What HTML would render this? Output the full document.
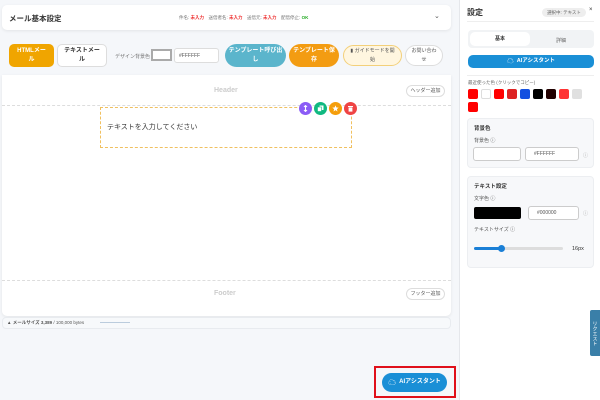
<!DOCTYPE html><html><head><meta charset="utf-8"><style>
*{box-sizing:border-box;margin:0;padding:0}
body{width:600px;height:400px;overflow:hidden;background:#f5f7fa;font-family:"Liberation Sans","Noto Sans CJK JP",sans-serif;position:relative;color:#333}
.a{position:absolute}
.card{background:#fff;border-radius:5px;box-shadow:0 1px 3px rgba(0,0,0,.08)}
.btn{position:absolute;border-radius:5px;font-size:6px;font-weight:bold;display:flex;align-items:center;justify-content:center;text-align:center;line-height:9px}
.sw{position:absolute;width:10px;height:10px;border-radius:2px}
.ic{position:absolute;width:13px;height:13px;border-radius:50%;top:102px;display:flex;align-items:center;justify-content:center}
.inp{position:absolute;border:1px solid #ccc;border-radius:3px;background:#fff;font-size:5px;color:#555;padding-left:8px;display:flex;align-items:center}
</style></head><body>
<div class="a card" style="left:2px;top:5px;width:449px;height:25px"></div>
<div class="a" style="left:9px;top:13px;font-size:7.5px;font-weight:bold">メール基本設定</div>
<div class="a" style="left:179px;top:15px;font-size:4.5px;color:#777">件名: <b style="color:#e33">未入力</b>　送信者名: <b style="color:#e33">未入力</b>　送信元: <b style="color:#e33">未入力</b>　配信停止: <b style="color:#2a2">OK</b></div>
<div class="a" style="left:434px;top:12px;font-size:7px;color:#555">⌄</div>
<div class="a" style="left:2px;top:37px;width:449px;height:38px;background:#f5f7fa;border-radius:5px 5px 0 0"></div>
<div class="btn" style="left:9px;top:44px;width:45px;height:23px;background:#f0a500;color:#fff">HTMLメー<br>ル</div>
<div class="btn" style="left:57px;top:44px;width:50px;height:23px;background:#fff;border:1px solid #ddd">テキストメー<br>ル</div>
<div class="a" style="left:115px;top:53px;font-size:5px;color:#777">デザイン背景色</div>
<div class="a" style="left:151px;top:49px;width:21px;height:12px;border:2px solid #aaa;background:#fff"></div>
<div class="inp" style="left:174px;top:48px;width:45px;height:15px;border-color:#ddd;padding-left:4px">#FFFFFF</div>
<div class="btn" style="left:225px;top:44px;width:61px;height:23px;background:#5bb5cc;color:#fff;border-radius:12px">テンプレート呼び出<br>し</div>
<div class="btn" style="left:289px;top:44px;width:50px;height:23px;background:#f39c12;color:#fff;border-radius:12px">テンプレート保<br>存</div>
<div class="btn" style="left:343px;top:45px;width:59px;height:21px;background:#fff6e0;border:1px solid #f3d07a;color:#555;border-radius:11px;font-weight:normal;font-size:5px">▮ ガイドモードを開<br>始</div>
<div class="btn" style="left:405px;top:45px;width:38px;height:21px;background:#fff;border:1px solid #ddd;color:#555;border-radius:11px;font-weight:normal;font-size:5px">お問い合わ<br>せ</div>
<div class="a" style="left:2px;top:75px;width:449px;height:241px;background:#fff;border-radius:0 0 5px 5px;box-shadow:0 1px 3px rgba(0,0,0,.08)"></div>
<div class="a" style="left:214px;top:87px;font-size:7px;font-weight:bold;color:#ccc">Header</div>
<div class="btn" style="left:406px;top:85px;width:39px;height:12px;border:1px solid #ddd;border-radius:6px;font-weight:normal;font-size:5px;color:#555">ヘッダー追加</div>
<div class="a" style="left:2px;top:105px;width:449px;border-top:1px dashed #ddd"></div>
<div class="a" style="left:100px;top:107px;width:252px;height:41px;border:1px dashed #f0c060"></div>
<div class="a" style="left:107px;top:122px;font-size:7px">テキストを入力してください</div>
<div class="ic" style="left:299px;background:#8b5cf6"><svg width="7" height="7" viewBox="0 0 7 7"><path d="M3.5 0.5V6.5M2 2L3.5 0.5 5 2M2 5L3.5 6.5 5 5" stroke="#fff" stroke-width="1" fill="none"/></svg></div>
<div class="ic" style="left:314px;background:#10b981"><svg width="7" height="7" viewBox="0 0 7 7"><rect x="2.5" y="0.5" width="4" height="4.5" fill="#fff"/><rect x="0.5" y="2" width="4" height="4.5" fill="#fff" stroke="#10b981" stroke-width=".6"/></svg></div>
<div class="ic" style="left:329px;background:#f59e0b"><svg width="7" height="7" viewBox="0 0 10 10"><path d="M5 0.5L6.3 3.6 9.5 3.8 7 5.9 7.8 9.2 5 7.4 2.2 9.2 3 5.9 0.5 3.8 3.7 3.6Z" fill="#fff"/></svg></div>
<div class="ic" style="left:344px;background:#ef4444"><svg width="7" height="7" viewBox="0 0 7 7"><rect x="1" y="1" width="5" height="1" fill="#fff"/><rect x="1.6" y="2.4" width="3.8" height="4.2" fill="#fff"/></svg></div>
<div class="a" style="left:2px;top:280px;width:449px;border-top:1px dashed #ddd"></div>
<div class="a" style="left:214px;top:290px;font-size:7px;font-weight:bold;color:#ccc">Footer</div>
<div class="btn" style="left:406px;top:288px;width:39px;height:12px;border:1px solid #ddd;border-radius:6px;font-weight:normal;font-size:5px;color:#555">フッター追加</div>
<div class="a" style="left:2px;top:317px;width:449px;height:12px;border:1px solid #e8ebef;border-radius:4px;background:#f7f9fb"></div>
<div class="a" style="left:7px;top:320px;font-size:4.5px;color:#555">▲ <b>メールサイズ 3,389</b> / 100,000 bytes</div>
<div class="a" style="left:100px;top:322px;width:30px;height:1px;background:#bcd"></div>
<div class="a" style="left:374px;top:366px;width:82px;height:32px;border:2px solid #e0101a"></div>
<div class="btn" style="left:382px;top:373px;width:65px;height:19px;background:#1a8fd6;color:#fff;border-radius:10px;font-size:6px"><span style="font-size:8px">☁</span>&nbsp; AIアシスタント</div>
<div class="a" style="left:459px;top:0;width:141px;height:400px;background:#fff;border-left:1px solid #e5e7eb"></div>
<div class="a" style="left:467px;top:7px;font-size:8px;font-weight:bold">設定</div>
<div class="a" style="left:542px;top:8px;width:44px;height:9px;background:#eee;border-radius:5px;font-size:4.5px;color:#666;text-align:center;line-height:9px">選択中: テキスト</div>
<div class="a" style="left:589px;top:7px;font-size:6px">×</div>
<div class="a" style="left:467px;top:21px;width:127px;border-top:1px solid #eee"></div>
<div class="a" style="left:468px;top:30px;width:126px;height:18px;background:#f1f3f5;border-radius:4px"></div>
<div class="btn" style="left:470px;top:32px;width:60px;height:14px;background:#fff;font-size:5px">基本</div>
<div class="a" style="left:556px;top:37px;font-size:5px;color:#666">詳細</div>
<div class="btn" style="left:468px;top:55px;width:126px;height:13px;background:#1a8fd6;color:#fff;font-size:5.5px"><span style="font-size:7px">☁</span>&nbsp; AIアシスタント</div>
<div class="a" style="left:467px;top:75px;width:127px;border-top:1px solid #eee"></div>
<div class="a" style="left:468px;top:80px;font-size:4.5px;color:#666">最近使った色 (クリックでコピー)</div>
<div class="sw" style="left:468px;top:89px;background:#f00"></div>
<div class="sw" style="left:481px;top:89px;background:#fff;border:1px solid #ddd"></div>
<div class="sw" style="left:494px;top:89px;background:#f00"></div>
<div class="sw" style="left:507px;top:89px;background:#d22"></div>
<div class="sw" style="left:520px;top:89px;background:#1450e0"></div>
<div class="sw" style="left:533px;top:89px;background:#000"></div>
<div class="sw" style="left:546px;top:89px;background:#200"></div>
<div class="sw" style="left:559px;top:89px;background:#f33"></div>
<div class="sw" style="left:572px;top:89px;background:#e0e0e0"></div>
<div class="sw" style="left:468px;top:102px;background:#f00"></div>
<div class="a" style="left:467px;top:118px;width:127px;height:50px;background:#f7f8fa;border:1px solid #eceef1;border-radius:4px"></div>
<div class="a" style="left:474px;top:124px;font-size:5.5px;font-weight:bold">背景色</div>
<div class="a" style="left:474px;top:137px;font-size:5px;color:#555">背景色 ⓘ</div>
<div class="inp" style="left:473px;top:147px;width:48px;height:14px"></div>
<div class="inp" style="left:525px;top:147px;width:54px;height:14px">#FFFFFF</div>
<div class="a" style="left:583px;top:152px;font-size:5px;color:#aaa">ⓘ</div>
<div class="a" style="left:467px;top:176px;width:127px;height:92px;background:#f7f8fa;border:1px solid #eceef1;border-radius:4px"></div>
<div class="a" style="left:474px;top:182px;font-size:5.5px;font-weight:bold">テキスト設定</div>
<div class="a" style="left:474px;top:195px;font-size:5px;color:#555">文字色 ⓘ</div>
<div class="a" style="left:474px;top:207px;width:47px;height:12px;background:#000;border-radius:2px"></div>
<div class="inp" style="left:528px;top:206px;width:51px;height:14px">#000000</div>
<div class="a" style="left:583px;top:210px;font-size:5px;color:#aaa">ⓘ</div>
<div class="a" style="left:474px;top:226px;font-size:5px;color:#555">テキストサイズ ⓘ</div>
<div class="a" style="left:474px;top:247px;width:29px;height:3px;background:#1a7fd6;border-radius:2px"></div>
<div class="a" style="left:503px;top:247px;width:60px;height:3px;background:#ddd;border-radius:2px"></div>
<div class="a" style="left:498px;top:245px;width:7px;height:7px;background:#1a7fd6;border-radius:50%"></div>
<div class="a" style="left:572px;top:246px;font-size:5.5px">16px</div>
<div class="a" style="left:590px;top:310px;width:10px;height:46px;background:#3a7fa8;border-radius:2px 0 0 2px;color:#fff;font-size:5px;writing-mode:vertical-rl;display:flex;align-items:center;justify-content:center">リクエスト</div>
</body></html>
